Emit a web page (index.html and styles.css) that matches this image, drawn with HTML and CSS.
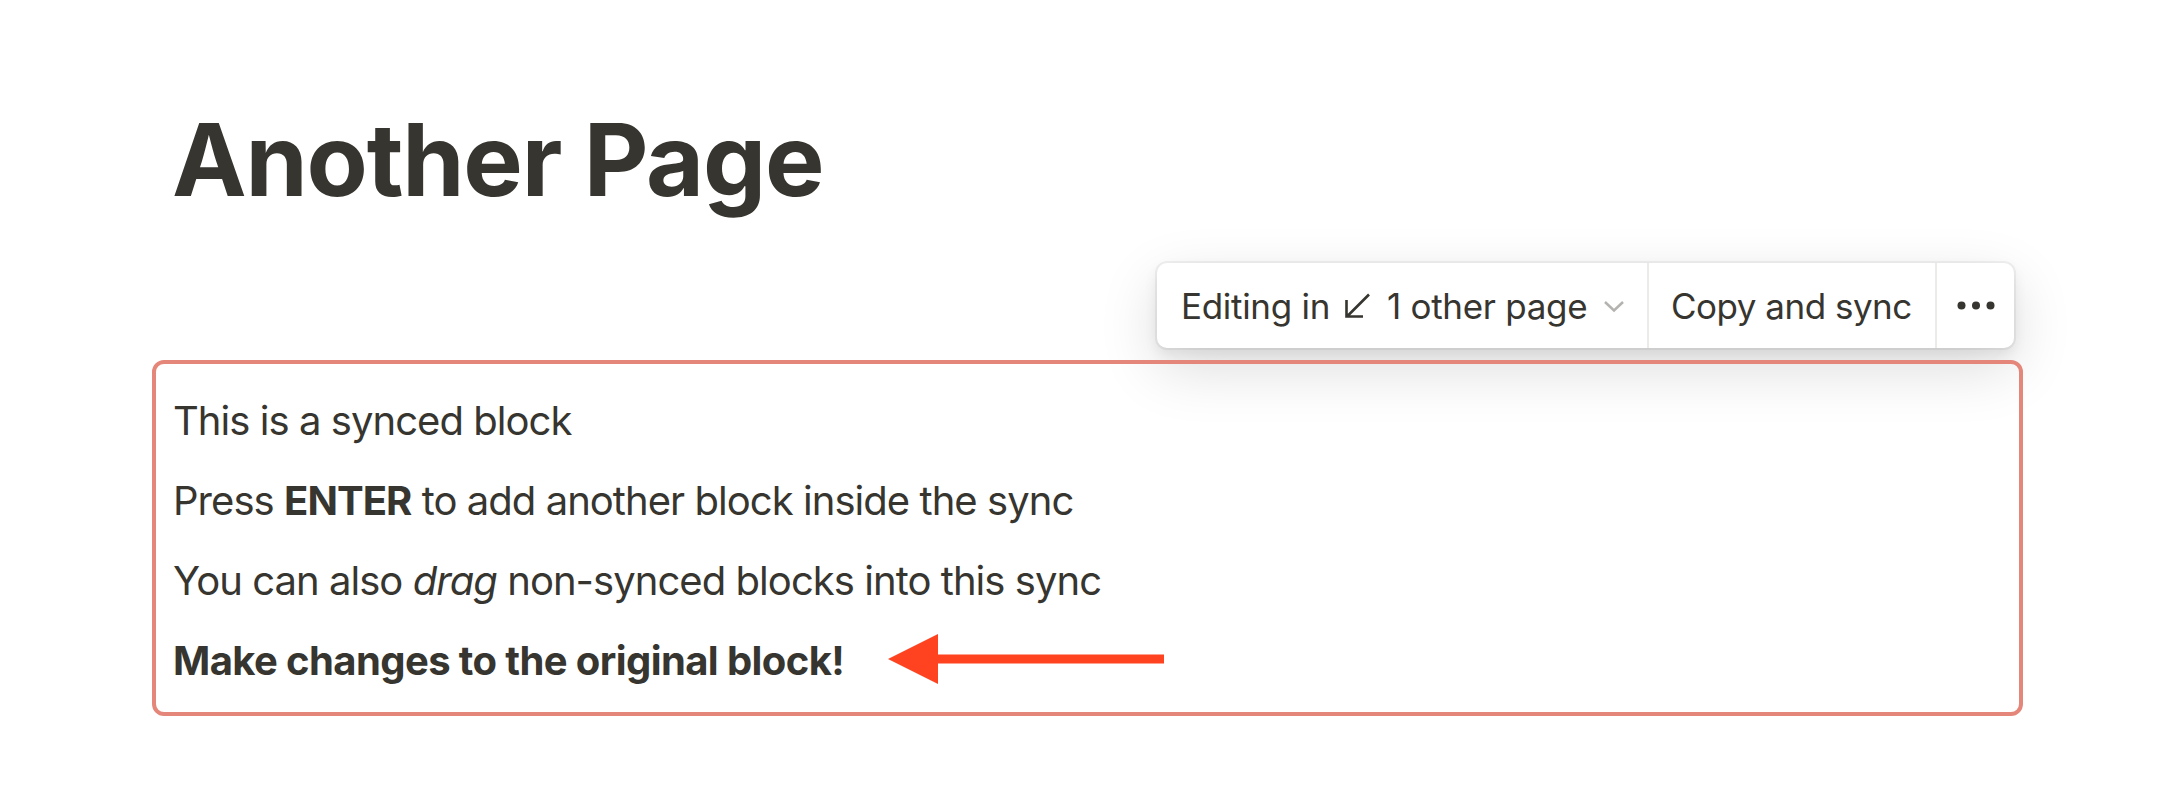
FILE: index.html
```html
<!DOCTYPE html>
<html>
<head>
<meta charset="utf-8">
<link rel="stylesheet" href="styles.css">
</head>
<body>
<div class="page">
  <h1 class="title">Another Page</h1>
  <div class="toolbar-row">
    <div class="toolbar">
      <div class="tb-item tb-editing">
        <span>Editing in</span>
        <svg class="ico-arrow" width="27" height="26" viewBox="0 0 27 26"><path d="M25 1.5 L3.5 23 M2.5 7 V23.5 H19" fill="none" stroke="#37352f" stroke-width="2.6"/></svg>
        <span>1 other page</span>
        <svg class="ico-chev" width="22" height="13" viewBox="0 0 22 13"><path d="M2 2 L11 10.5 L20 2" fill="none" stroke="#b4b3b0" stroke-width="2.5"/></svg>
      </div>
      <div class="tb-item tb-copy">Copy and sync</div>
      <div class="tb-item tb-more">
        <svg width="38" height="9" viewBox="0 0 38 9"><circle cx="4.5" cy="4.5" r="4"/><circle cx="19" cy="4.5" r="4"/><circle cx="33.5" cy="4.5" r="4"/></svg>
      </div>
    </div>
  </div>
  <div class="synced">
    <div class="line">This is a synced block</div>
    <div class="line">Press <b>ENTER</b> to add another block inside the sync</div>
    <div class="line">You can also <i>drag</i> non-synced blocks into this sync</div>
    <div class="line"><b class="strong-line">Make changes to the original block!</b></div>
    <svg class="annot-arrow" width="276" height="50" viewBox="0 0 276 50"><polygon points="0,25 50,0 50,50" fill="#ff4321"/><rect x="49" y="20.5" width="227" height="9" fill="#ff4321"/></svg>
  </div>
</div>
</body>
</html>
```

FILE: styles.css
```css
html, body {
  margin: 0;
  padding: 0;
  background: #ffffff;
}
body {
  font-family: Inter, "Noto Sans", sans-serif;
  color: #37352f;
}
.page {
  width: 1871px;
  margin-left: 152px;
  padding-top: 100px;
}
.title {
  margin: 0;
  padding-left: 20px;
  font-size: 100px;
  line-height: 120px;
  font-weight: 700;
  letter-spacing: -1.2px;
  color: #37352f;
}
.toolbar-row {
  display: flex;
  justify-content: flex-end;
  margin-top: 43px;
  padding-right: 9px;
}
.toolbar {
  display: flex;
  height: 85px;
  background: #fff;
  border-radius: 10px;
  box-shadow: rgba(15,15,15,0.05) 0 0 0 2px, rgba(15,15,15,0.08) 0 6px 14px, rgba(15,15,15,0.14) 0 20px 60px;
  font-size: 35px;
  letter-spacing: -0.5px;
}
.tb-item {
  display: flex;
  align-items: center;
  height: 100%;
  box-sizing: border-box;
}
.tb-item + .tb-item {
  border-left: 2px solid #ebebea;
}
.tb-editing {
  width: 490px;
  padding-left: 24px;
  letter-spacing: -0.3px;
}
.ico-arrow {
  margin: 0 16px 0 14px;
}
.ico-chev {
  margin-left: 16px;
  margin-top: 2px;
}
.tb-copy {
  width: 288px;
  padding-left: 22px;
}
.tb-more {
  width: 79px;
  justify-content: center;
  fill: #37352f;
}
.synced {
  position: relative;
  margin-top: 12px;
  height: 356px;
  box-sizing: border-box;
  border: 4px solid #e4877a;
  border-radius: 12px;
  padding: 17px 18px 11px 17px;
  font-size: 40px;
  letter-spacing: -0.95px;
}
.line {
  line-height: 80px;
  height: 80px;
  white-space: nowrap;
}
.line b {
  font-weight: 700;
}
.line b.strong-line {
  letter-spacing: -0.6px;
}
.annot-arrow {
  position: absolute;
  left: 732px;
  top: 270px;
}
```
